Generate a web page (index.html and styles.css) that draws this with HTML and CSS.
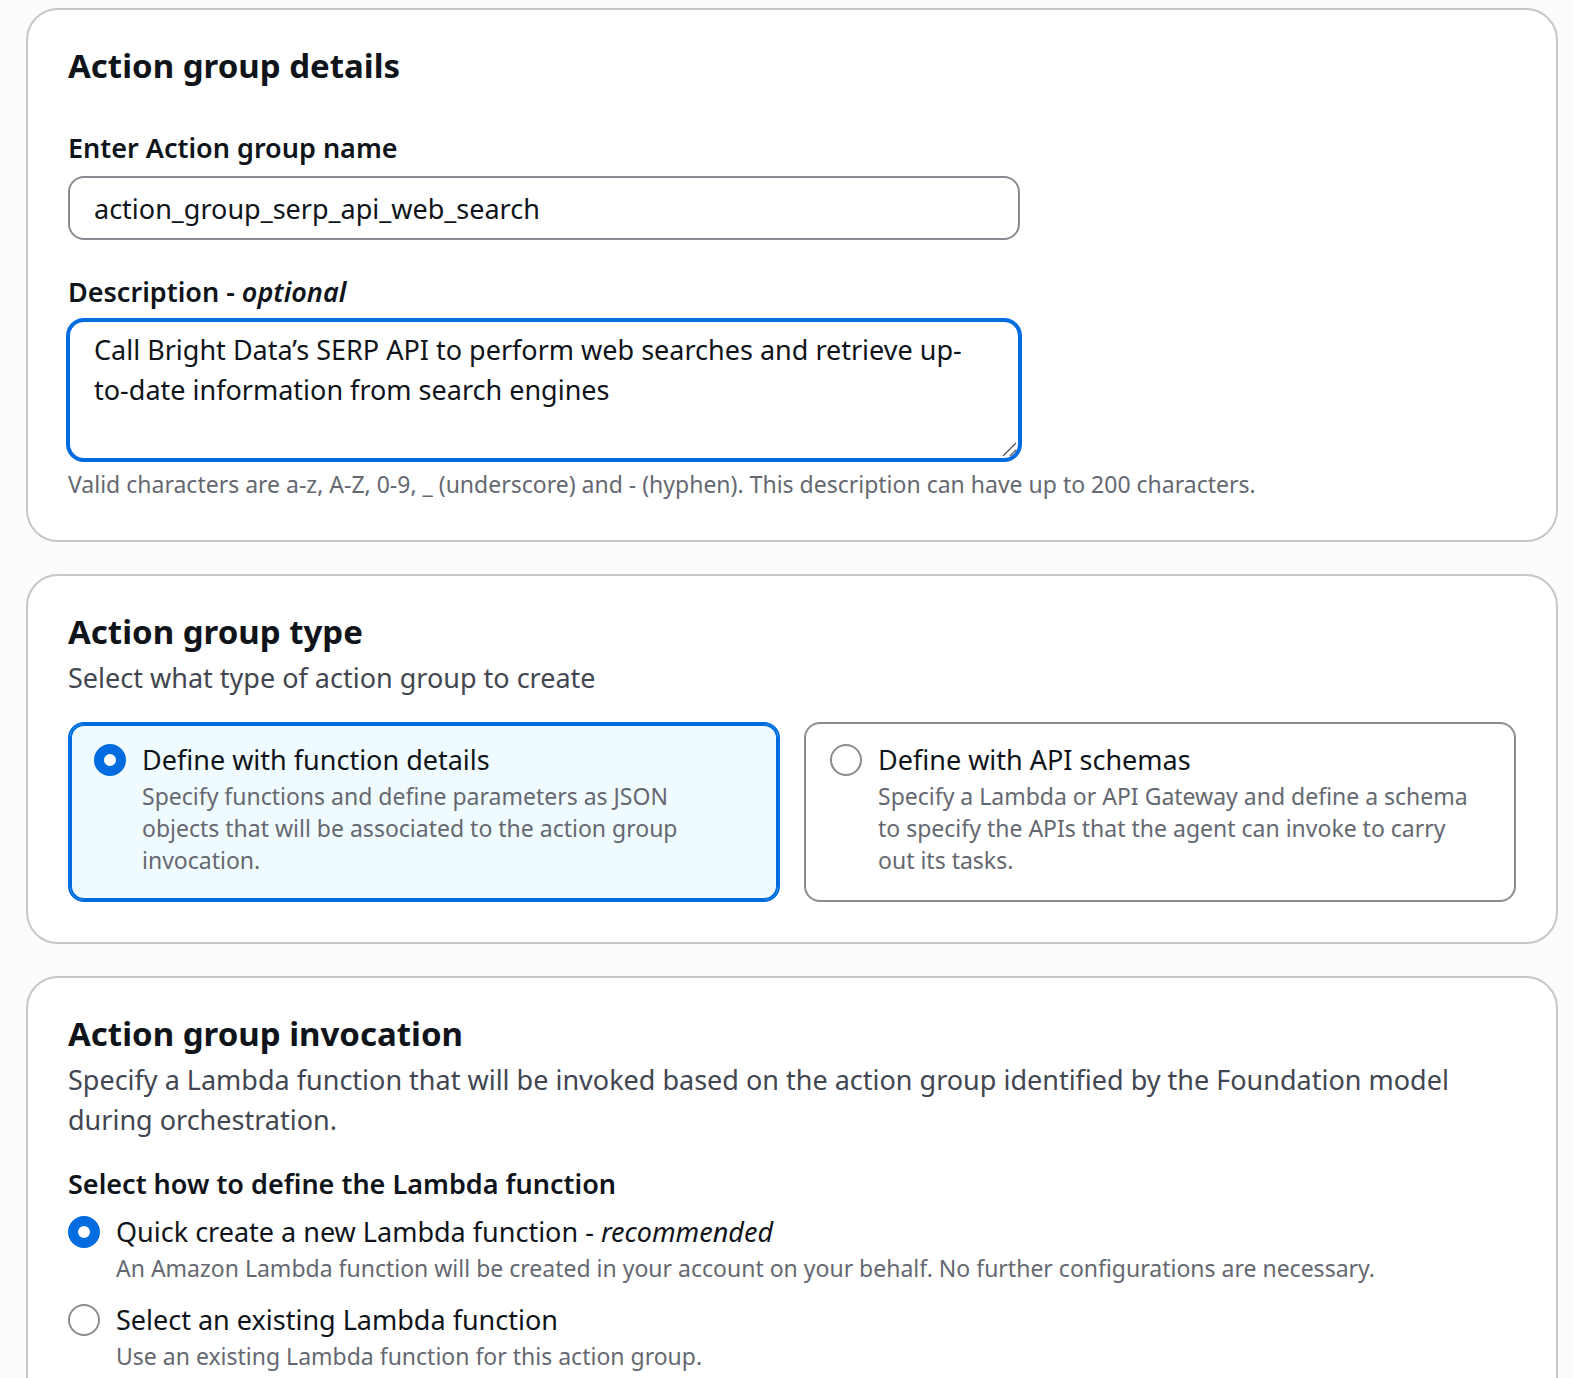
FILE: index.html
```
<!DOCTYPE html>
<html lang="en">
<head>
    <meta charset="UTF-8">
    <meta name="viewport" content="width=device-width, initial-scale=1.0">
    <title>Create action group</title>
    <link rel="stylesheet" href="styles.css">
</head>
<body>
    <form class="page">
        <section class="card">
            <h2>Action group details</h2>
            <div class="fields">
                <div class="field">
                    <label class="label" for="groupName">Enter Action group name</label>
                    <input class="text-input" type="text" id="groupName" value="action_group_serp_api_web_search">
                </div>
                <div class="field">
                    <label class="label" for="description">Description - <em>optional</em></label>
                    <div class="text-area-wrap">
                        <textarea class="text-input text-area focused" id="description" aria-describedby="descriptionHint">Call Bright Data’s SERP API to perform web searches and retrieve up-to-date information from search engines</textarea>
                        <svg class="grip" viewBox="0 0 16 16" width="16" height="16" aria-hidden="true">
                            <path d="M2 15L15 2M9 15L15 9" fill="none" stroke="#555" stroke-width="1.3"/>
                        </svg>
                    </div>
                    <p class="hint" id="descriptionHint">Valid characters are a-z, A-Z, 0-9, _ (underscore) and - (hyphen). This description can have up to 200 characters.</p>
                </div>
            </div>
        </section>

        <section class="card">
            <h2>Action group type</h2>
            <p class="subtitle">Select what type of action group to create</p>
            <div class="tiles">
                <label class="option tile selected">
                    <input type="radio" name="groupType" checked>
                    <span class="option-text">
                        <span class="option-title">Define with function details</span>
                        <span class="hint">Specify functions and define parameters as JSON objects that will be associated to the action group invocation.</span>
                    </span>
                </label>
                <label class="option tile">
                    <input type="radio" name="groupType">
                    <span class="option-text">
                        <span class="option-title">Define with API schemas</span>
                        <span class="hint">Specify a Lambda or API Gateway and define a schema to specify the APIs that the agent can invoke to carry out its tasks.</span>
                    </span>
                </label>
            </div>
        </section>

        <section class="card">
            <h2>Action group invocation</h2>
            <p class="subtitle">Specify a Lambda function that will be invoked based on the action group identified by the Foundation model during orchestration.</p>
            <fieldset class="options">
                <legend class="label">Select how to define the Lambda function</legend>
                <label class="option">
                    <input type="radio" name="lambda" checked>
                    <span class="option-text">
                        <span class="option-title">Quick create a new Lambda function - <em>recommended</em></span>
                        <span class="hint">An Amazon Lambda function will be created in your account on your behalf. No further configurations are necessary.</span>
                    </span>
                </label>
                <label class="option">
                    <input type="radio" name="lambda">
                    <span class="option-text">
                        <span class="option-title">Select an existing Lambda function</span>
                        <span class="hint">Use an existing Lambda function for this action group.</span>
                    </span>
                </label>
            </fieldset>
        </section>
    </form>
</body>
</html>
```
FILE: styles.css
```
* {
    box-sizing: border-box;
}
body {
    margin: 0;
    height: 100vh;
    overflow: hidden;
    background-color: #fcfcfd;
    color: #0f141a;
    font-family: "Noto Sans", "Open Sans", sans-serif;
    font-size: 27px;
    line-height: 40px;
}
h2, p {
    margin: 0;
}
h2 {
    font-size: 33px;
    line-height: 44px;
    font-weight: 700;
}
.page {
    display: flex;
    flex-direction: column;
    gap: 32px;
    padding: 8px 15px 32px 26px;
}
.card {
    padding: 34px 40px 40px;
    background-color: #fff;
    border: 2px solid #c6c6cd;
    border-radius: 32px;
}
.subtitle {
    margin-top: 4px;
    color: #424650;
}
.label {
    display: block;
    padding: 0;
    margin-bottom: 8px;
    font-weight: 600;
}
.hint {
    display: block;
    color: #656871;
    font-size: 23px;
    line-height: 32px;
}

/* Text fields */
.fields {
    display: flex;
    flex-direction: column;
    gap: 32px;
    margin-top: 40px;
}
.field {
    display: grid;
    grid-template-columns: 2fr 1fr;
    column-gap: 20px;
}
.field .label,
.field .hint {
    grid-column: 1 / -1;
}
.text-input {
    display: block;
    width: 100%;
    height: 64px;
    padding: 8px 24px;
    border: 2px solid #8c8c94;
    border-radius: 16px;
    background-color: #fff;
    color: #0f141a;
    font: inherit;
}
.text-area-wrap {
    position: relative;
    margin-bottom: 8px;
}
.text-area {
    height: 140px;
    padding-right: 32px;
    resize: none;
}
.grip {
    position: absolute;
    right: 3px;
    bottom: 3px;
}
.focused {
    outline: none;
    border-color: #006ce0;
    box-shadow: 0 0 0 2px #006ce0;
}

/* Radio options */
.options {
    display: flex;
    flex-direction: column;
    gap: 16px;
    min-width: 0;
    margin: 24px 0 0;
    padding: 0;
    border: 0;
}
.option {
    display: flex;
    gap: 16px;
}
.option-text {
    flex: 1;
    min-width: 0;
}
.option-title {
    display: block;
}
input[type="radio"] {
    appearance: none;
    flex: none;
    width: 32px;
    height: 32px;
    margin: 4px 0;
    border: 2px solid #8c8c94;
    border-radius: 50%;
    background-color: #fff;
}
input[type="radio"]:checked {
    border: 10px solid #006ce0;
}
.tiles {
    display: grid;
    grid-template-columns: 1fr 1fr;
    gap: 24px;
    margin-top: 24px;
}
.tile {
    padding: 16px 36px 24px 24px;
    border: 2px solid #8c8c94;
    border-radius: 16px;
}
.selected {
    border-color: #006ce0;
    background-color: #f0fbff;
    box-shadow: inset 0 0 0 2px #006ce0;
}
```
